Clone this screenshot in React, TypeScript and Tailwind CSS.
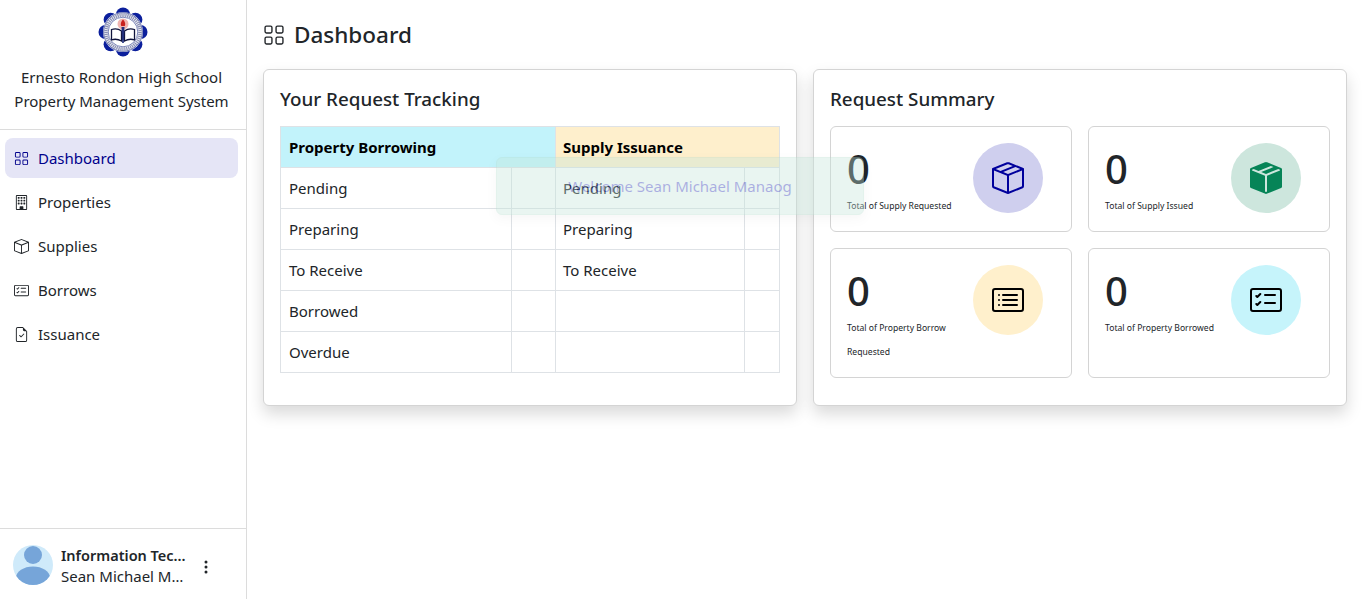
import React from "react";
import {
  BsBoxSeam,
  BsBoxSeamFill,
  BsBox,
  BsBuilding,
  BsCardChecklist,
  BsCardList,
  BsFileEarmarkCheck,
  BsGrid,
  BsThreeDotsVertical,
} from "react-icons/bs";

const font = { fontFamily: '"Noto Sans", "Open Sans", sans-serif' };

function SchoolLogo() {
  const scallops = Array.from({ length: 8 }, (_, i) => (i * Math.PI) / 4);
  return (
    <svg viewBox="0 0 50 50" className="h-[50px] w-[50px]">
      {scallops.map((a) => (
        <circle key={a} cx={25 + 17.5 * Math.cos(a)} cy={25 + 17.5 * Math.sin(a)} r="7" fill="#0b1f9c" />
      ))}
      <circle cx="25" cy="25" r="20" fill="#f4f4f8" />
      <circle cx="25" cy="25" r="19.300" fill="none" stroke="#2a3a8c" strokeWidth="0.7" />
      <circle cx="25" cy="25" r="17" fill="none" stroke="#8a90b4" strokeWidth="3.500" strokeDasharray="1.200 0.800" />
      <circle cx="25" cy="25" r="14.800" fill="#ffffff" stroke="#2a3a8c" strokeWidth="0.6" />
      <circle cx="25" cy="17" r="5.500" fill="#f0b4b0" />
      <path d="M25 12.500c2 2.200 2.800 4 1.800 6.500h-3.600c-1-2.500 -.2-4.300 1.800-6.500z" fill="#c8201e" />
      <path d="M13.500 22.500c3.500-1.200 7-.8 10 1.500v10c-3-1.800-6.500-2.200-10-1.200z" fill="#ffffff" stroke="#10143c" strokeWidth="1.300" />
      <path d="M36.500 22.500c-3.500-1.200-7-.8-10 1.500v10c3-1.800 6.500-2.200 10-1.200z" fill="#ffffff" stroke="#10143c" strokeWidth="1.300" />
      <path d="M23.500 20h3l-.7 16h-1.600z" fill="#23307c" />
    </svg>
  );
}

function Avatar() {
  return (
    <svg viewBox="0 0 40 40" className="h-10 w-10 shrink-0">
      <defs>
        <clipPath id="avatar-clip">
          <circle cx="20" cy="20" r="20" />
        </clipPath>
      </defs>
      <g clipPath="url(#avatar-clip)">
        <rect width="40" height="40" fill="#cfeafa" />
        <circle cx="20" cy="10" r="9" fill="#76a5d9" />
        <ellipse cx="20" cy="33" rx="17" ry="11.500" fill="#76a5d9" />
      </g>
    </svg>
  );
}

const navItems = [
  { label: "Properties", icon: BsBuilding },
  { label: "Supplies", icon: BsBox },
  { label: "Borrows", icon: BsCardChecklist },
  { label: "Issuance", icon: BsFileEarmarkCheck },
];

function Sidebar() {
  return (
    <aside className="flex h-[599px] w-[247px] shrink-0 flex-col border-r border-[#dcdcdc] bg-white">
      <div className="flex h-[130px] flex-col items-center border-b border-[#dcdcdc] pt-[7px]">
        <SchoolLogo />
        <p className="mt-[8px] pr-[3px] text-center text-[15px] leading-[24px] text-[#212529]">
          Ernesto Rondon High School
          <br />
          Property Management System
        </p>
      </div>

      <nav className="flex flex-1 flex-col gap-1 px-[5px] pt-2 pr-[8px]">
        <a className="flex h-10 items-center gap-[9px] rounded-lg bg-[#e5e5f6] pl-[9px] text-[15px] text-[#00008b]">
          <BsGrid size={15} />
          Dashboard
        </a>
        {navItems.map((item) => (
          <a key={item.label} className="flex h-10 items-center gap-[9px] pl-[9px] text-[15px] text-[#212529]">
            <item.icon size={15} />
            {item.label}
          </a>
        ))}
      </nav>

      <div className="flex h-[71px] items-center border-t border-[#dcdcdc] pt-[2px] pl-[13px]">
        <Avatar />
        <div className="mt-[1px] ml-2 w-[128px] text-[15px] leading-[21px] text-[#212529]">
          <div className="truncate text-[14.5px] font-semibold">Information Technology</div>
          <div className="truncate">Sean Michael Manaog</div>
        </div>
        <BsThreeDotsVertical size={16} className="mt-[3px] ml-[9px] text-[#212529]" />
      </div>
    </aside>
  );
}

const trackingRows = [
  ["Pending", "Pending"],
  ["Preparing", "Preparing"],
  ["To Receive", "To Receive"],
  ["Borrowed", ""],
  ["Overdue", ""],
];

function TrackingTable() {
  return (
    <table className="w-[499px] table-fixed border-collapse text-[15px] text-[#212529]">
      <colgroup>
        <col className="w-[231px]" />
        <col className="w-[44px]" />
        <col className="w-[189px]" />
        <col className="w-[35px]" />
      </colgroup>
      <thead>
        <tr className="h-[41px]">
          <th colSpan={2} className="border border-[#dee2e6] bg-[#c2f3fb] px-2 text-left font-bold text-black">
            Property Borrowing
          </th>
          <th colSpan={2} className="border border-[#dee2e6] bg-[#feefcc] pr-2 pl-[7px] text-left font-bold text-black">
            Supply Issuance
          </th>
        </tr>
      </thead>
      <tbody>
        {trackingRows.map(([left, right]) => (
          <tr key={left} className="h-[41px]">
            <td className="border border-[#dee2e6] px-2">{left}</td>
            <td className="border border-[#dee2e6] px-2"></td>
            <td className="border border-[#dee2e6] pr-2 pl-[7px]">{right}</td>
            <td className="border border-[#dee2e6] px-2"></td>
          </tr>
        ))}
      </tbody>
    </table>
  );
}

function StatCard({
  label,
  circle,
  color,
  icon: Icon,
}: {
  label: string;
  circle: string;
  color: string;
  icon: React.ComponentType<{ size?: number; className?: string }>;
}) {
  return (
    <div className="flex items-start justify-between rounded-md border border-[#d4d4d4] bg-white p-4">
      <div className="w-[112px]">
        <div className="text-[40px] leading-[52px] font-medium text-[#212529]">0</div>
        <div className="-mt-[1px] text-[8.600px] leading-[24px] text-[#212529]">{label}</div>
      </div>
      <div className={`mr-[12px] flex h-[70px] w-[70px] items-center justify-center rounded-full ${circle}`}>
        <Icon size={32} className={color} />
      </div>
    </div>
  );
}

export default function App() {
  return (
    <div className="relative flex h-[599px] w-[1362px] overflow-hidden bg-white" style={font}>
      <Sidebar />

      <main className="flex-1 pt-[20px] pr-[15px] pl-4">
        <h1 className="flex h-[30px] items-center gap-[9px] text-[22.500px] font-medium text-[#212529]">
          <BsGrid size={22} />
          Dashboard
        </h1>

        <div className="mt-[19px] grid grid-cols-2 gap-4">
          <section className="h-[337px] rounded-md border border-[#d4d4d4] bg-white p-4 shadow-[0_8px_16px_rgba(0,0,0,0.15)]">
            <h2 className="mb-[14px] text-[18.800px] leading-[26px] font-medium text-[#212529]">Your Request Tracking</h2>
            <TrackingTable />
          </section>

          <section className="h-[337px] rounded-md border border-[#d4d4d4] bg-white p-4 shadow-[0_8px_16px_rgba(0,0,0,0.15)]">
            <h2 className="mb-[14px] text-[18.800px] leading-[26px] font-medium text-[#212529]">Request Summary</h2>
            <div className="grid grid-cols-2 grid-rows-[106px_130px] gap-4">
              <StatCard label="Total of Supply Requested" circle="bg-[#cfcfee]" color="text-[#00009c]" icon={BsBoxSeam} />
              <StatCard label="Total of Supply Issued" circle="bg-[#cde6dd]" color="text-[#068457]" icon={BsBoxSeamFill} />
              <StatCard label="Total of Property Borrow Requested" circle="bg-[#fff0cc]" color="text-black" icon={BsCardList} />
              <StatCard label="Total of Property Borrowed" circle="bg-[#c6f4fb]" color="text-black" icon={BsCardChecklist} />
            </div>
          </section>
        </div>
      </main>

      {/* welcome toast, caught mid fade */}
      <div className="absolute top-[157px] left-[496px] flex h-[58px] w-[368px] items-center justify-center rounded-md border border-[#b4dccd] bg-[#c4e6da] pt-[1px] text-[15px] text-[#1928af] opacity-[0.37] shadow-[0_4px_10px_rgba(0,0,0,0.08)]">
        Welcome Sean Michael Manaog
      </div>
    </div>
  );
}
